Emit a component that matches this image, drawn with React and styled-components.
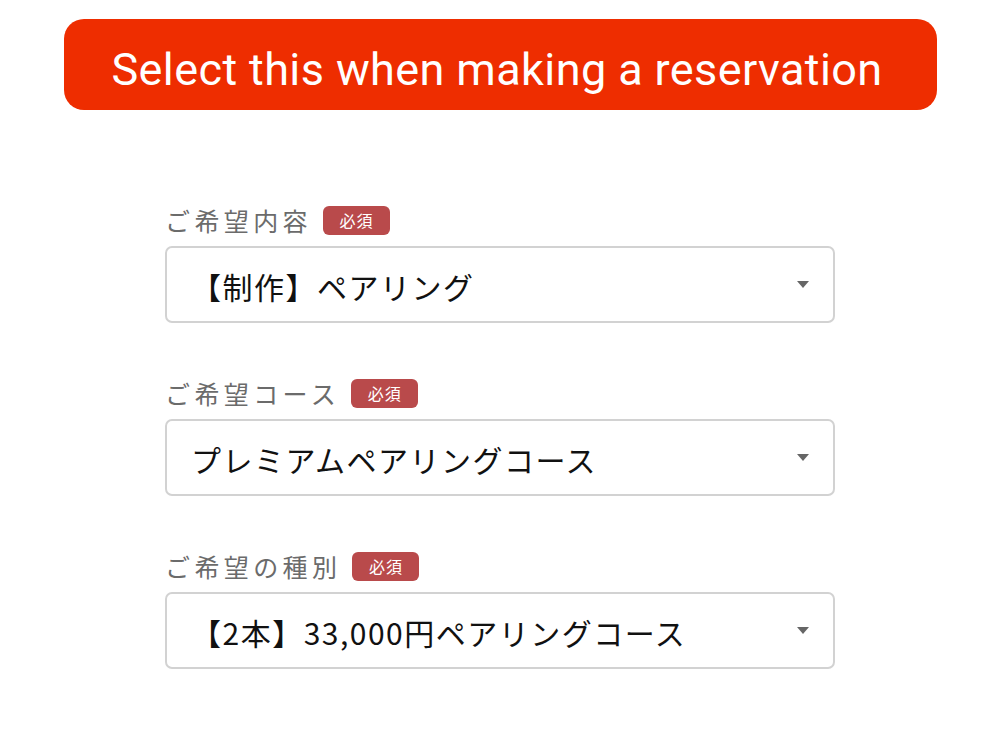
import React from "react";
import styled, { createGlobalStyle } from "styled-components";

const Global = createGlobalStyle`
  html, body { margin: 0; padding: 0; background: #fff; }
  body { font-family: "Noto Sans CJK JP", "Noto Sans", sans-serif; }
`;

const Page = styled.div`
  width: 1000px;
  display: flex;
  flex-direction: column;
  align-items: center;
  padding-top: 19px;
`;

const Banner = styled.div`
  width: 873px;
  height: 91px;
  box-sizing: border-box;
  padding: 10px 6px 0 0;
  background: #ee2d00;
  border-radius: 20px;
  display: flex;
  align-items: center;
  justify-content: center;
  color: #fff;
  font-family: Roboto, "Liberation Sans", sans-serif;
  font-size: 45px;
  letter-spacing: 0.4px;
`;

const Form = styled.div`
  width: 670px;
  margin-top: 94px;
  display: flex;
  flex-direction: column;
  gap: 54px;
`;

const Field = styled.div`
  display: flex;
  flex-direction: column;
  gap: 10px;
`;

const LabelRow = styled.div`
  display: flex;
  align-items: center;
  gap: 15px;
  height: 32px;
`;

const LabelText = styled.span`
  font-size: 25px;
  color: #6b6b6b;
  letter-spacing: 4.4px;
  margin-right: -4px;
`;

const Badge = styled.span`
  background: #b94a4b;
  color: #fff;
  font-size: 16px;
  border-radius: 6px;
  width: 67px;
  height: 29px;
  display: flex;
  align-items: center;
  justify-content: center;
  letter-spacing: 1px;
`;

const Select = styled.div`
  height: 77px;
  box-sizing: border-box;
  border: 2px solid #d2d2d2;
  border-radius: 7px;
  display: flex;
  align-items: center;
  justify-content: space-between;
  padding: 0 24px;
`;

const Value = styled.span`
  font-size: 30px;
  color: #111;
  letter-spacing: 1.5px;
  padding-top: 2px;
`;

const Arrow = () => (
  <svg width="12" height="8" viewBox="0 0 12 8">
    <path d="M0 0 L12 0 L6 7 Z" fill="#666" />
  </svg>
);

const fields = [
  { label: "ご希望内容", value: "【制作】ペアリング" },
  { label: "ご希望コース", value: "プレミアムペアリングコース" },
  { label: "ご希望の種別", value: "【2本】33,000円ペアリングコース" },
];

export default function App() {
  return (
    <>
      <Global />
      <Page>
        <Banner>Select this when making a reservation</Banner>
        <Form>
          {fields.map((f) => (
            <Field key={f.label}>
              <LabelRow>
                <LabelText>{f.label}</LabelText>
                <Badge>必須</Badge>
              </LabelRow>
              <Select>
                <Value>{f.value}</Value>
                <Arrow />
              </Select>
            </Field>
          ))}
        </Form>
      </Page>
    </>
  );
}
